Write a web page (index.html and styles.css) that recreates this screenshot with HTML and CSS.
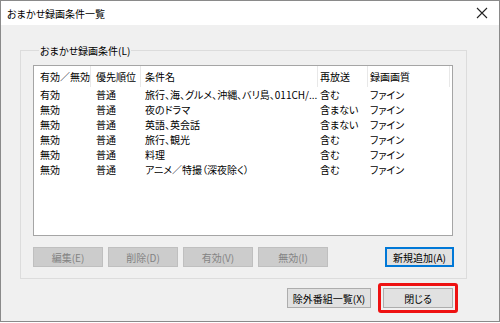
FILE: index.html
```html
<!DOCTYPE html>
<html lang="ja">
  <head>
    <meta charset="UTF-8" />
    <title>おまかせ録画条件一覧</title>
    <link rel="stylesheet" href="styles.css">
  </head>
  <body>
    <div class="window">
      <!-- Title bar -->
      <div class="titlebar">
        <span class="title">おまかせ録画条件一覧</span>
        <svg class="close" width="12" height="12" viewBox="0 0 12 12">
          <path d="M1 1 L11 11 M11 1 L1 11" stroke="#222" stroke-width="1.1" fill="none" />
        </svg>
      </div>

      <div class="content">
        <fieldset class="group">
          <legend>おまかせ録画条件(L)</legend>

          <div class="listview">
            <div class="row header">
              <div class="c1">有効／無効</div>
              <div class="c2">優先順位</div>
              <div class="c3">条件名</div>
              <div class="c4">再放送</div>
              <div class="c5">録画画質</div>
            </div>
            <div class="row">
              <div class="c1">有効</div><div class="c2">普通</div>
              <div class="c3">旅行、海、グルメ、沖縄、バリ島、011CH/...</div>
              <div class="c4">含む</div><div class="c5">ファイン</div>
            </div>
            <div class="row">
              <div class="c1">無効</div><div class="c2">普通</div>
              <div class="c3">夜のドラマ</div>
              <div class="c4">含まない</div><div class="c5">ファイン</div>
            </div>
            <div class="row">
              <div class="c1">無効</div><div class="c2">普通</div>
              <div class="c3">英語、英会話</div>
              <div class="c4">含まない</div><div class="c5">ファイン</div>
            </div>
            <div class="row">
              <div class="c1">無効</div><div class="c2">普通</div>
              <div class="c3">旅行、観光</div>
              <div class="c4">含む</div><div class="c5">ファイン</div>
            </div>
            <div class="row">
              <div class="c1">無効</div><div class="c2">普通</div>
              <div class="c3">料理</div>
              <div class="c4">含む</div><div class="c5">ファイン</div>
            </div>
            <div class="row">
              <div class="c1">無効</div><div class="c2">普通</div>
              <div class="c3">アニメ／特撮（深夜除く）</div>
              <div class="c4">含む</div><div class="c5">ファイン</div>
            </div>
          </div>

          <div class="list-buttons">
            <button class="btn" disabled>編集(E)</button>
            <button class="btn" disabled>削除(D)</button>
            <button class="btn" disabled>有効(V)</button>
            <button class="btn" disabled>無効(I)</button>
            <button class="btn focused">新規追加(A)</button>
          </div>
        </fieldset>

        <div class="dialog-buttons">
          <button class="btn wide">除外番組一覧(X)</button>
          <span class="highlight"><button class="btn">閉じる</button></span>
        </div>
      </div>
    </div>
  </body>
</html>
```

FILE: styles.css
```css
* {
  box-sizing: border-box;
  margin: 0;
  padding: 0;
}
body {
  background: #fff;
  font-family: "Noto Sans CJK JP", "Noto Sans", sans-serif;
  font-size: 10px;
  font-feature-settings: "palt";
  color: #000;
}
.window {
  width: 500px;
  height: 322px;
  border: 1px solid #8a8a8a;
  background: #f0f0f0;
}
.titlebar {
  height: 24px;
  background: #fff;
  display: flex;
  align-items: center;
  justify-content: space-between;
  padding: 0 11px 0 6px;
}
.title {
  font-size: 10px;
}
.content {
  padding: 18px 0 0 19px;
}
.group {
  width: 447px;
  border: 1px solid #dcdcdc;
  padding: 7px 12px 11px 12px;
}
.group legend {
  margin-left: 6px;
  padding: 0 1px;
  font-size: 10px;
}
.listview {
  width: 420px;
  height: 171px;
  border: 1px solid #a5a5a5;
  background: #fff;
}
.row {
  display: flex;
  height: 15px;
  align-items: center;
  white-space: nowrap;
}
.row.header {
  height: 21px;
}
.row > div {
  overflow: hidden;
}
.row.header > div {
  height: 100%;
  display: flex;
  align-items: center;
  border-right: 1px solid #e8e8e8;
}
.c1 { width: 57px; padding-left: 6px; }
.c2 { width: 50px; padding-left: 5px; }
.c3 { width: 177px; padding-left: 4px; }
.c4 { width: 50px; padding-left: 2px; }
.c5 { width: 82px; padding-left: 2px; }
.list-buttons {
  display: flex;
  gap: 5px;
  margin-top: 11px;
}
.btn {
  width: 70px;
  height: 20px;
  font-family: inherit;
  font-size: 10px;
  font-feature-settings: "palt";
  background: #e1e1e1;
  border: 1px solid #adadad;
  color: #000;
}
.btn:disabled {
  background: #cccccc;
  border-color: #bfbfbf;
  color: #838383;
}
.btn.focused {
  margin-left: auto;
  width: 69px;
  border: 2px solid #0078d7;
}
.dialog-buttons {
  display: flex;
  justify-content: flex-end;
  align-items: center;
  gap: 7px;
  width: 438px;
  margin-top: 4px;
}
.btn.wide {
  width: 84px;
}
.highlight {
  display: flex;
  border: 3px solid #ee1111;
  border-radius: 3px;
  padding: 2px;
}
```
